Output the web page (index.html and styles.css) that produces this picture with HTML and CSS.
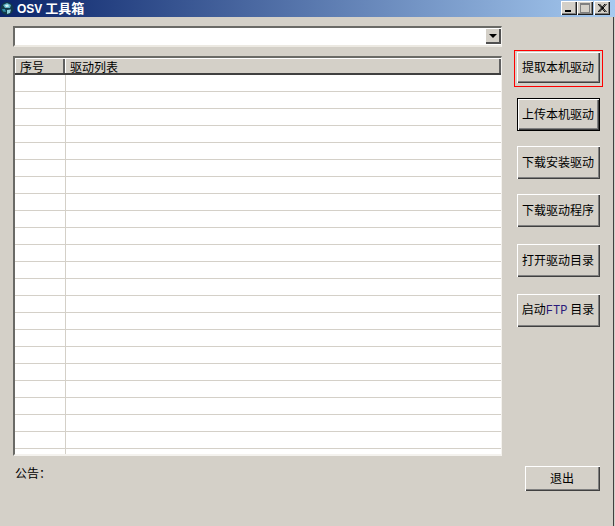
FILE: index.html
```html
<!DOCTYPE html>
<html lang="zh">
<head>
<meta charset="utf-8">
<title>OSV 工具箱</title>
<link rel="stylesheet" href="styles.css">
</head>
<body>
<div class="window">
  <header class="titlebar">
    <svg class="app-icon" width="14" height="15" viewBox="0 0 14 15">
      <circle cx="7" cy="7.5" r="6.5" fill="#123a4a"/>
      <path d="M3 4 L7 2 L11 4 L10 7 L5 7 Z" fill="#5fb4c8"/>
      <path d="M5 4 L8 3.5 L9 5.5 L6 6 Z" fill="#d8f2f6"/>
      <path d="M2 8 L5 8 L6 11 L3 10.5 Z" fill="#2f8ca6"/>
      <path d="M7 9 L11 8.5 L10 12 L7 13 Z" fill="#8fd0dc"/>
    </svg>
    <span class="title"><span class="latin">OSV</span> 工具箱</span>
    <div class="caption">
      <button class="cap"><svg width="8" height="8"><rect x="0" y="6" width="6" height="2" fill="#000"/></svg></button>
      <button class="cap"><svg width="10" height="10"><path d="M0 .5H10M0 1.5H10M.5 0V10M9.5 0V10M0 9.5H10" stroke="#808080" fill="none"/></svg></button>
      <button class="cap close"><svg width="9" height="8"><path d="M0 0L7 8M1.5 0L8.5 8M7 0L0 8M8.5 0L1.5 8" stroke="#000" fill="none"/></svg></button>
    </div>
  </header>
  <main class="content">
    <section class="left">
      <div class="combo">
        <div class="combo-field"></div>
        <div class="combo-btn"><svg width="8" height="4"><path d="M0 0H8L4 4Z" fill="#000"/></svg></div>
      </div>
      <div class="list">
        <div class="list-head">
          <div class="head-cell c1">序号</div>
          <div class="head-cell c2">驱动列表</div>
        </div>
        <div class="list-body">
          <div class="row"><div class="cell c1"></div></div>
          <div class="row"><div class="cell c1"></div></div>
          <div class="row"><div class="cell c1"></div></div>
          <div class="row"><div class="cell c1"></div></div>
          <div class="row"><div class="cell c1"></div></div>
          <div class="row"><div class="cell c1"></div></div>
          <div class="row"><div class="cell c1"></div></div>
          <div class="row"><div class="cell c1"></div></div>
          <div class="row"><div class="cell c1"></div></div>
          <div class="row"><div class="cell c1"></div></div>
          <div class="row"><div class="cell c1"></div></div>
          <div class="row"><div class="cell c1"></div></div>
          <div class="row"><div class="cell c1"></div></div>
          <div class="row"><div class="cell c1"></div></div>
          <div class="row"><div class="cell c1"></div></div>
          <div class="row"><div class="cell c1"></div></div>
          <div class="row"><div class="cell c1"></div></div>
          <div class="row"><div class="cell c1"></div></div>
          <div class="row"><div class="cell c1"></div></div>
          <div class="row"><div class="cell c1"></div></div>
          <div class="row"><div class="cell c1"></div></div>
          <div class="row"><div class="cell c1"></div></div>
          <div class="row"><div class="cell c1"></div></div>
        </div>
      </div>
      <div class="notice">公告：</div>
    </section>
    <aside class="right">
      <div class="focus-ring"><button class="btn">提取本机驱动</button></div>
      <button class="btn default">上传本机驱动</button>
      <button class="btn">下载安装驱动</button>
      <button class="btn tall">下载驱动程序</button>
      <button class="btn tall">打开驱动目录</button>
      <button class="btn">启动<span class="ftp">FTP</span> 目录</button>
      <button class="btn exit">退出</button>
    </aside>
  </main>
</div>
</body>
</html>
```
FILE: styles.css
```css
* { box-sizing: border-box; }
html, body { margin: 0; padding: 0; }
body { background: #d4d0c8; font-family: "Noto Sans CJK SC", "Liberation Sans", sans-serif; font-size: 12px; color: #000; overflow: hidden; }
.window { width: 615px; height: 526px; display: flex; flex-direction: column; }
.titlebar { height: 17px; flex: none; display: flex; align-items: center; background: linear-gradient(90deg, #0a246a 0%, #a6caf0 100%); color: #fff; }
.app-icon { margin-left: 0; flex: none; }
.title { margin-left: 3px; margin-bottom: 1px; font-weight: bold; font-size: 13px; line-height: 15px; }
.latin { font-family: "Liberation Sans", sans-serif; font-size: 12px; }
.caption { margin-left: auto; margin-right: 5px; margin-bottom: 1px; display: flex; }
.cap { width: 16px; height: 14px; padding: 0; border: 0; background: #d4d0c8; display: flex; align-items: center; justify-content: center; box-shadow: inset 1px 1px 0 #fff, inset -1px -1px 0 #202020, inset -2px -2px 0 #808080; }
.cap.close { margin-left: 1px; }
.content { flex: 1; display: flex; min-height: 0; box-shadow: inset -1px 0 0 #d4d0c8, inset -2px 0 0 #404040; }
.left { width: 489px; margin-left: 13px; padding-top: 9px; flex: none; }
.combo { height: 21px; display: flex; background: #fff; border-top: 2px solid #6a6a66; border-left: 2px solid #6a6a66; border-right: 1px solid #f4f2ee; border-bottom: 2px solid #ece9e2; }
.combo-field { flex: 1; }
.combo-btn { width: 16px; height: 16px; margin-top: 0; background: #d4d0c8; display: flex; align-items: center; justify-content: center; box-shadow: inset 1px 1px 0 #fff, inset -2px -2px 0 #505050; }
.list { height: 400px; margin-top: 9px; background: #fff; border-top: 2px solid #6a6a66; border-left: 2px solid #6a6a66; border-right: 1px solid #f4f2ee; border-bottom: 2px solid #f4f2ee; overflow: hidden; }
.list-head { display: flex; height: 17px; background: #d4d0c8; border-bottom: 2px solid #404040; }
.head-cell { line-height: 17px; height: 15px; padding-left: 5px; box-shadow: inset 1px 1px 0 #fff, inset -2px 0 0 #606060; }
.c1 { width: 50px; flex: none; }
.c2 { flex: 1; }
.row { display: flex; height: 17px; border-bottom: 1px solid #d4d0c8; }
.cell.c1 { border-right: 1px solid #d4d0c8; width: 51px; }
.notice { margin-top: 8px; margin-left: 2px; line-height: 18px; }
.right { flex: 1; display: flex; flex-direction: column; align-items: flex-start; padding: 33px 0 0 15px; }
.btn { width: 83px; height: 33px; padding: 0 1px 2px 0; border: 0; background: #d4d0c8; font: 12px/1 "Noto Sans CJK SC", sans-serif; color: #000; box-shadow: inset 1px 1px 0 #fff, inset -1px -1px 0 #404040, inset -2px -2px 0 #808080; }
.focus-ring { margin: 0 0 11px -3px; border: 1px solid #f00; padding: 1px 2px 3px; width: 89px; height: 37px; }
.focus-ring .btn { height: 31px; }
.right > .btn { margin-bottom: 15px; }
.right > .btn.tall { margin-bottom: 17px; }
.btn.default { box-shadow: inset 0 0 0 1px #000, inset 2px 2px 0 #fff, inset -2px -2px 0 #404040, inset -3px -3px 0 #808080; }
.ftp { color: #2a1a7a; font-family: "Liberation Mono", monospace; }
.right > .btn.exit { width: 75px; height: 25px; margin-left: 8px; margin-top: 124px; margin-bottom: 0; padding: 0 1px 2px 0; }
```
